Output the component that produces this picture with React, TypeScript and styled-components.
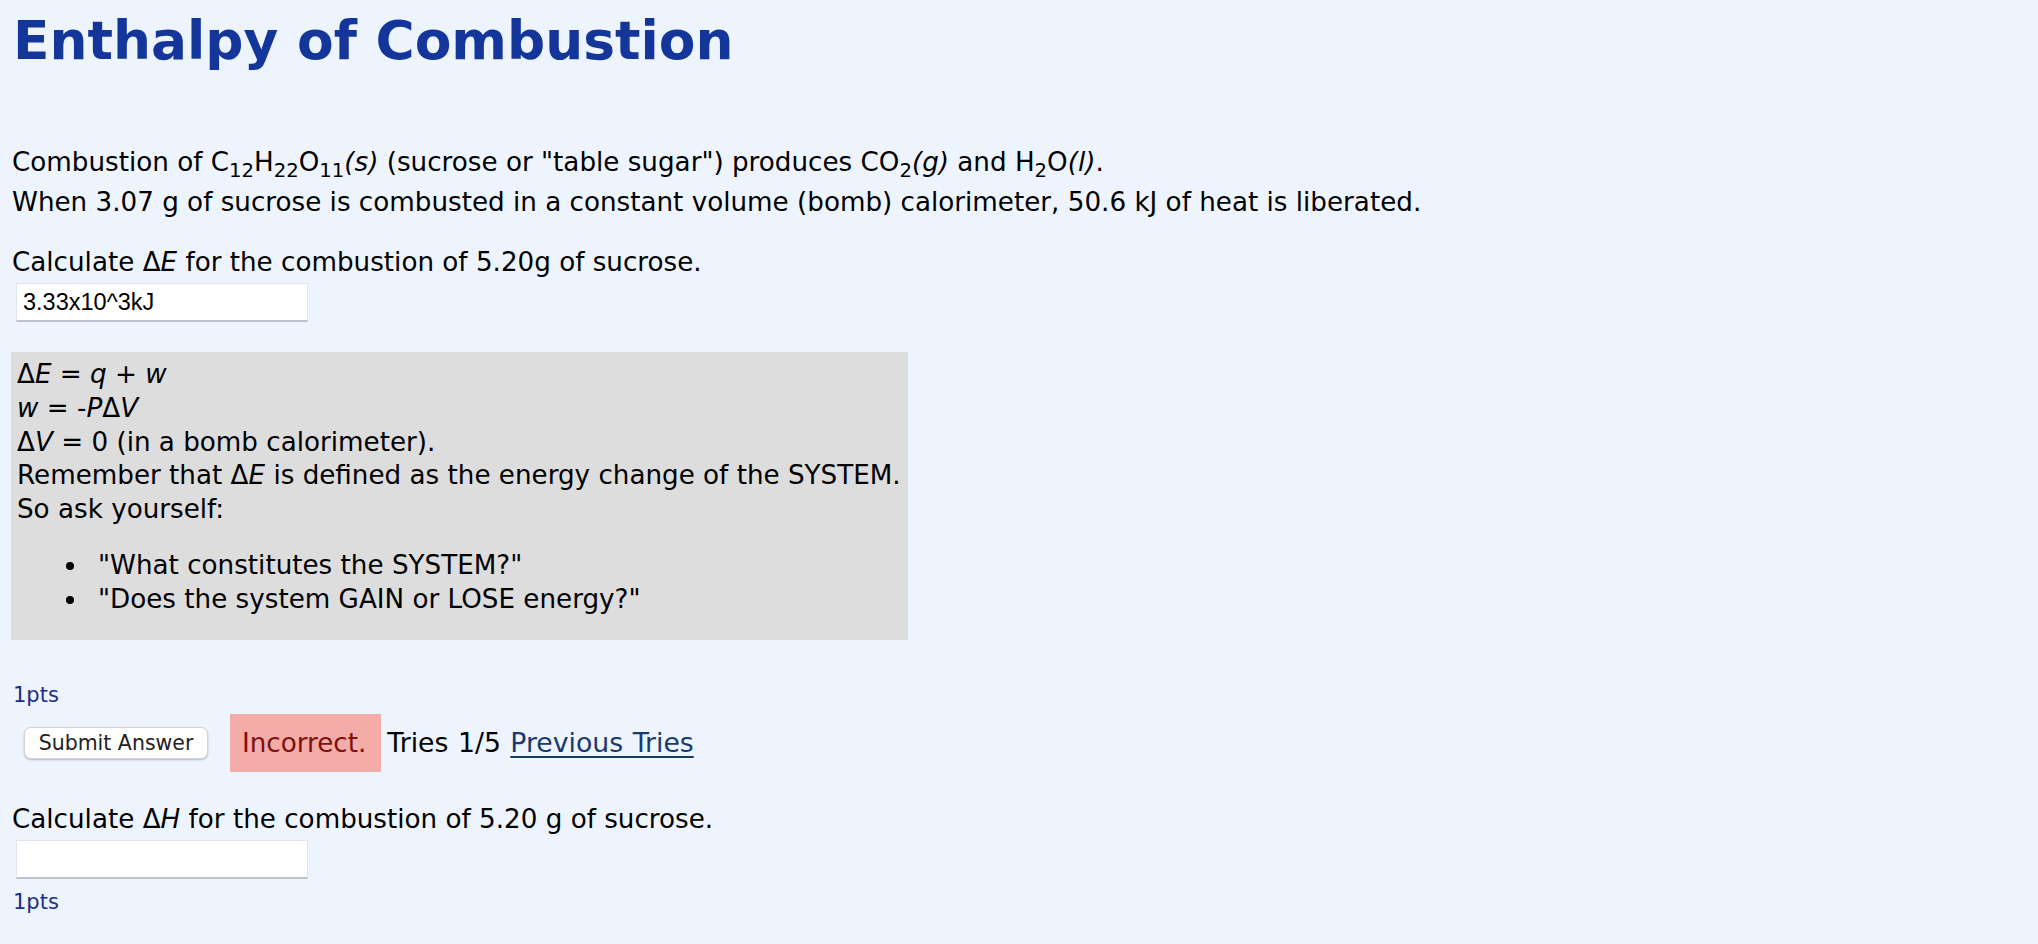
import React from "react";
import styled, { createGlobalStyle } from "styled-components";

const GlobalStyle = createGlobalStyle`
  html, body {
    margin: 0;
    padding: 0;
    background: #eef4fe;
  }
  body {
    font-family: "DejaVu Sans", Verdana, sans-serif;
    color: #000;
  }
`;

const Page = styled.div`
  padding: 0 12px 40px 12px;
  min-height: 944px;
  box-sizing: border-box;
`;

const Title = styled.h1`
  margin: 9px 0 0 1px;
  font-family: "DejaVu Sans", Verdana, sans-serif;
  font-weight: 700;
  font-size: 53.4px;
  line-height: normal;
  color: #14359a;
`;

const Intro = styled.p`
  margin: 70px 0 0 0;
  font-size: 26.2px;
  line-height: 40px;

  sub {
    font-size: 0.75em;
    line-height: 0;
    vertical-align: -0.3em;
  }
`;

const Question = styled.p`
  margin: 23px 0 0 0;
  font-size: 26.2px;
  line-height: 34px;
`;

const AnswerInput = styled.input`
  display: block;
  box-sizing: border-box;
  margin: 4px 0 0 4px;
  width: 292px;
  height: 39px;
  padding: 0 6px;
  border: 1px solid #dfe5ef;
  border-bottom: 2px solid #bcc3ce;
  background: #fff;
  font-family: "Liberation Sans", Arial, sans-serif;
  font-size: 23.5px;
  color: #000;
  outline: none;
`;

const HintBox = styled.div`
  margin-top: 30px;
  width: fit-content;
  padding: 6px 7px 5px 6px;
  margin-left: -1px;
  background: #dddddd;
  font-size: 26.2px;
  line-height: 33.8px;
`;

const HintList = styled.ul`
  margin: 21px 0 18px 0;
  padding-left: 72px;

  li {
    padding-left: 9px;
    line-height: 34.5px;
  }
`;

const Points = styled.div<{ $gap: number }>`
  margin-top: ${(p) => p.$gap}px;
  font-size: 21px;
  line-height: 24px;
  color: #1b2d8a;
  padding-left: 1px;
`;

const SubmitRow = styled.div`
  display: flex;
  align-items: center;
  margin-top: 7px;
  font-size: 26.2px;
  line-height: 34px;
`;

const SubmitButton = styled.button`
  margin-left: 12px;
  width: 184px;
  height: 32px;
  padding: 0;
  background: #fff;
  border: 1px solid #d0d4da;
  border-radius: 7px;
  box-shadow: 0 1px 2px rgba(0, 0, 0, 0.25);
  font-family: "DejaVu Sans", Verdana, sans-serif;
  font-size: 20.5px;
  color: #222;
`;

const Verdict = styled.span`
  margin-left: 22px;
  padding: 12px 15px 12px 12px;
  background: #f4aca9;
  color: #7e1010;
`;

const Tries = styled.span`
  margin-left: 6px;
  white-space: pre;
  font-size: 26.7px;
  word-spacing: 1px;
`;

const TriesLink = styled.a`
  color: #193a6f;
  text-decoration: underline;
  text-underline-offset: 4px;
  text-decoration-thickness: 2px;
`;

const SecondQuestion = styled(Question)`
  margin-top: 30px;
`;

export default function App() {
  return (
    <>
      <GlobalStyle />
      <Page>
        <Title>Enthalpy of Combustion</Title>
        <Intro>
          Combustion of C<sub>12</sub>H<sub>22</sub>O<sub>11</sub>
          <i>(s)</i> (sucrose or "table sugar") produces CO<sub>2</sub>
          <i>(g)</i> and H<sub>2</sub>O<i>(l)</i>.
          <br />
          When 3.07 g of sucrose is combusted in a constant volume (bomb)
          calorimeter, 50.6 kJ of heat is liberated.
        </Intro>
        <Question>
          Calculate Δ<i>E</i> for the combustion of 5.20g of sucrose.
        </Question>
        <AnswerInput defaultValue="3.33x10^3kJ" />
        <HintBox>
          Δ<i>E</i> = <i>q</i> + <i>w</i>
          <br />
          <i>w</i> = -<i>P</i>Δ<i>V</i>
          <br />
          Δ<i>V</i> = 0 (in a bomb calorimeter).
          <br />
          Remember that Δ<i>E</i> is defined as the energy change of the
          SYSTEM.
          <br />
          So ask yourself:
          <HintList>
            <li>"What constitutes the SYSTEM?"</li>
            <li>"Does the system GAIN or LOSE energy?"</li>
          </HintList>
        </HintBox>
        <Points $gap={43}>1pts</Points>
        <SubmitRow>
          <SubmitButton>Submit Answer</SubmitButton>
          <Verdict>Incorrect.</Verdict>
          <Tries>
            Tries 1/5 <TriesLink href="#">Previous Tries</TriesLink>
          </Tries>
        </SubmitRow>
        <SecondQuestion>
          Calculate Δ<i>H</i> for the combustion of 5.20 g of sucrose.
        </SecondQuestion>
        <AnswerInput />
        <Points $gap={11}>1pts</Points>
      </Page>
    </>
  );
}
